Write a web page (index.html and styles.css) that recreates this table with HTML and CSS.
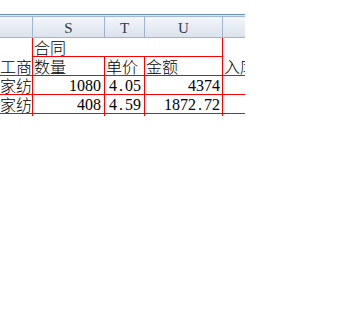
FILE: index.html
```html
<!DOCTYPE html>
<html lang="zh">
<head>
<meta charset="utf-8">
<link rel="stylesheet" href="styles.css">
</head>
<body>
<div class="sheet">
  <div class="rule"></div>
  <div class="row head">
    <div class="hc c0"></div>
    <div class="hc c1">S</div>
    <div class="hc c2">T</div>
    <div class="hc c3">U</div>
    <div class="hc c4"></div>
  </div>
  <div class="row">
    <div class="cell c0"></div>
    <div class="cell span lb bb cn">合同</div>
    <div class="cell c4 lb"></div>
  </div>
  <div class="row">
    <div class="cell c0 bb cn l0">工商</div>
    <div class="cell c1 lb bb cn">数量</div>
    <div class="cell c2 lb bb cn">单价</div>
    <div class="cell c3 lb bb cn">金额</div>
    <div class="cell c4 lb bb cn">入库</div>
  </div>
  <div class="row">
    <div class="cell c0 bb cn l0">家纺</div>
    <div class="cell c1 lb bb num">1080</div>
    <div class="cell c2 lb bb num">4<span class="dot">.</span>05</div>
    <div class="cell c3 lb bb num">4374</div>
    <div class="cell c4 lb bb"></div>
  </div>
  <div class="row">
    <div class="cell c0 bb cn l0">家纺</div>
    <div class="cell c1 lb bb num">408</div>
    <div class="cell c2 lb bb num">4<span class="dot">.</span>59</div>
    <div class="cell c3 lb bb num">1872<span class="dot">.</span>72</div>
    <div class="cell c4 lb bb"></div>
  </div>
  <div class="row stub">
    <div class="cell c0"></div>
    <div class="cell c1 lb"></div>
    <div class="cell c2 lb"></div>
    <div class="cell c3 lb"></div>
    <div class="cell c4 lb"></div>
  </div>
</div>
</body>
</html>
```
FILE: styles.css
```css
html, body {
  margin: 0;
  padding: 0;
  background: #ffffff;
}
.sheet {
  width: 245px;
  margin-top: 14px;
  overflow: hidden;
}
.rule {
  height: 1px;
  border-top: 1px solid #6f91ba;
  border-bottom: 1px solid #a3b9d3;
  background: #dce5f0;
}
.row {
  display: flex;
  height: 19px;
}
.row.head {
  height: 20px;
  border-bottom: 1px solid #9eb5cd;
  background: linear-gradient(#f3f6fa, #dce3ed);
}
.row.stub {
  height: 2px;
}
.c0 { width: 32px; }
.c1 { width: 72px; }
.c2 { width: 40px; }
.c3 { width: 78px; }
.c4 { width: 23px; }
.span { width: 190px; }
.hc {
  box-sizing: border-box;
  flex: none;
  height: 20px;
  text-align: center;
  font-family: "Liberation Serif", serif;
  font-size: 15px;
  line-height: 23px;
  color: #2b3d50;
}
.hc.c1, .hc.c2, .hc.c3, .hc.c4 {
  border-left: 1px solid #9eb5cd;
}
.cell {
  box-sizing: border-box;
  flex: none;
  height: 19px;
  overflow: hidden;
  white-space: nowrap;
  color: #000000;
}
.lb { border-left: 1px solid #ff0000; }
.bb { border-bottom: 1px solid #ff0000; }
.stub .cell { height: 2px; }
.cn {
  font-family: "Noto Sans CJK SC", sans-serif;
  font-size: 16px;
  font-weight: 300;
  line-height: 18px;
  padding-left: 1px;
}
.cn.l0 {
  padding-left: 0;
}
.num {
  font-family: "Liberation Serif", serif;
  font-size: 16px;
  line-height: 19px;
  text-align: right;
  padding-right: 3px;
}
.c3.num {
  padding-right: 2px;
}
.dot {
  display: inline-block;
  width: 8px;
  text-align: center;
}
```
